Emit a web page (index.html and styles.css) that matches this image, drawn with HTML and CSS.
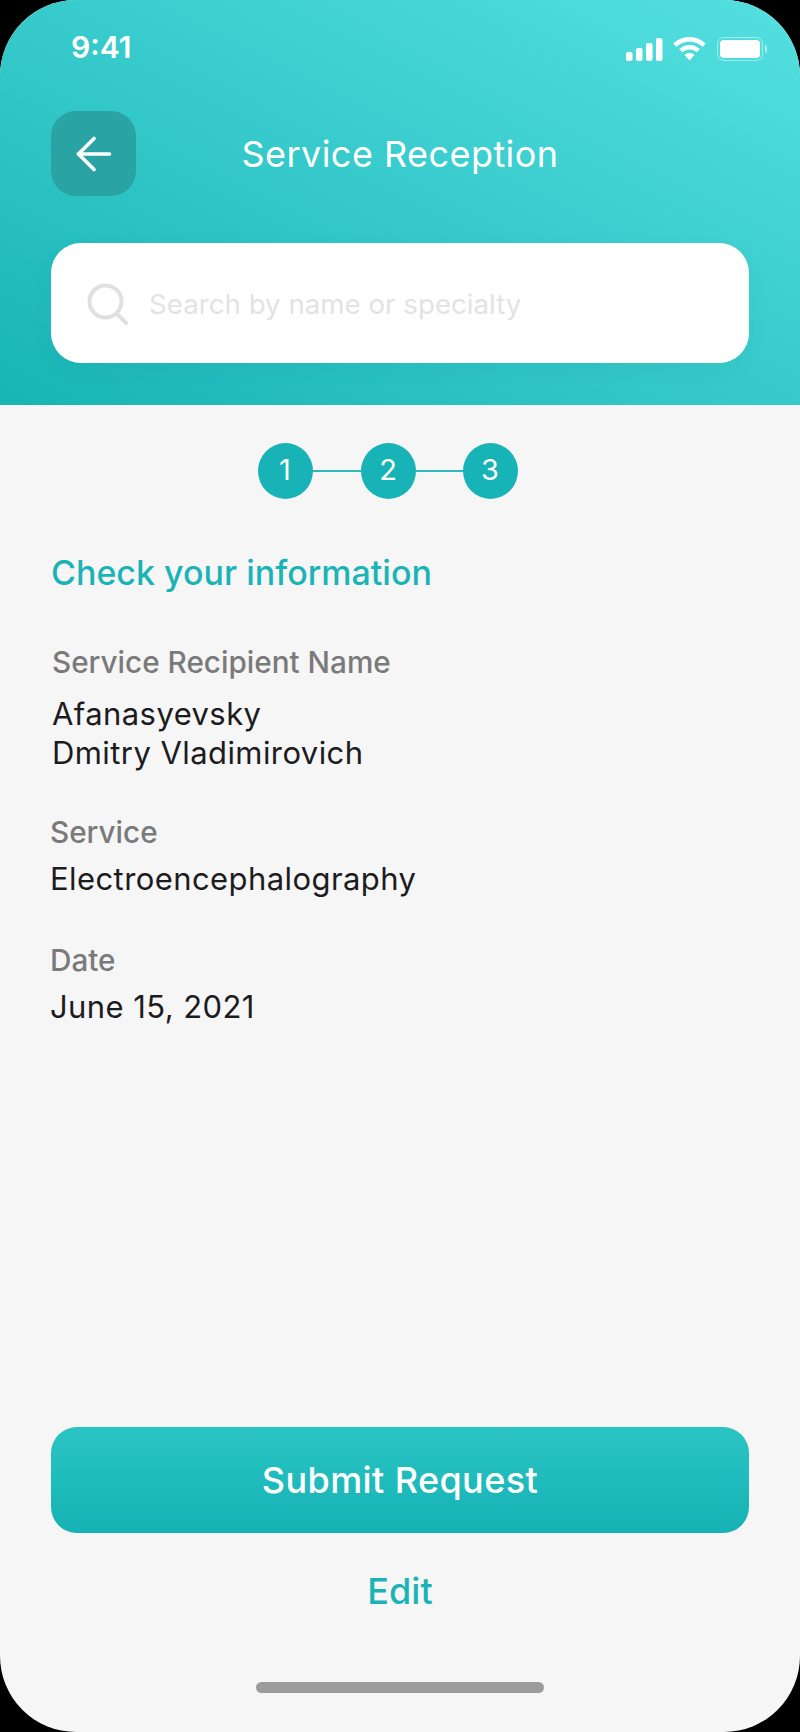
FILE: index.html
```html
<!DOCTYPE html>
<html lang="en">
<head>
<meta charset="utf-8">
<title>Service Reception</title>
<link rel="stylesheet" href="styles.css">
</head>
<body>
<div class="phone">
  <header class="header">
    <div class="status">
      <span class="time">9:41</span>
      <div class="status-icons">
        <svg class="signal" width="37" height="23" viewBox="0 0 37 23"><rect x="0" y="14" width="6.5" height="9" rx="2"/><rect x="10" y="10" width="6.5" height="13" rx="2"/><rect x="20" y="5" width="6.5" height="18" rx="2"/><rect x="30" y="0" width="6.5" height="23" rx="2"/></svg>
        <svg class="wifi" width="33" height="24" viewBox="0 0 33 24"><path d="M16.5 0C10.2 0 4.5 2.5.3 6.6l3 3.2C6.7 6.5 11.3 4.4 16.5 4.4s9.8 2.1 13.2 5.4l3-3.2C28.500 2.500 22.800 0 16.500 0z"/><path d="M16.500 8c-4 0-7.600 1.600-10.300 4.100l3 3.200c1.900-1.800 4.500-2.900 7.300-2.900s5.400 1.100 7.300 2.900l3-3.200C24.100 9.600 20.500 8 16.500 8z"/><path d="M16.500 16c-1.900 0-3.600.7-4.900 1.900l4.900 5.600 4.900-5.600c-1.300-1.200-3-1.900-4.900-1.900z"/></svg>
        <div class="battery"><div class="battery-body"><div class="battery-fill"></div></div><div class="battery-nub"></div></div>
      </div>
    </div>
    <div class="nav">
      <button class="back" aria-label="Back">
        <svg width="36" height="36" viewBox="0 0 36 36" fill="none" stroke="#fff" stroke-width="3.6" stroke-linecap="round" stroke-linejoin="round"><path d="M2.500 18H33.500"/><path d="M18 2.500 2.500 18 18 33.500"/></svg>
      </button>
      <h1 class="title">Service Reception</h1>
    </div>
    <div class="search">
      <svg class="search-icon" width="41" height="42" viewBox="0 0 41 42" fill="none" stroke="#e0e0e0" stroke-width="4" stroke-linecap="round"><circle cx="18.500" cy="18.500" r="16"/><path d="M29.500 30.500 39 40"/></svg>
      <span class="placeholder">Search by name or specialty</span>
    </div>
  </header>
  <main class="main">
    <div class="steps">
      <span class="step">1</span><span class="link"></span><span class="step">2</span><span class="link link-short"></span><span class="step">3</span>
    </div>
    <h2 class="heading">Check your information</h2>
    <section class="field field-name">
      <div class="label">Service Recipient Name</div>
      <div class="value">Afanasyevsky<br>Dmitry Vladimirovich</div>
    </section>
    <section class="field field-service">
      <div class="label">Service</div>
      <div class="value">Electroencephalography</div>
    </section>
    <section class="field field-date">
      <div class="label">Date</div>
      <div class="value">June 15, 2021</div>
    </section>
  </main>
  <footer class="footer">
    <button class="submit">Submit Request</button>
    <a class="edit">Edit</a>
    <div class="home"></div>
  </footer>
</div>
</body>
</html>
```

FILE: styles.css
```css
* { box-sizing: border-box; margin: 0; padding: 0; }
html, body { width: 800px; height: 1732px; background: #000; overflow: hidden; }
body { font-family: Inter, "Liberation Sans", sans-serif; }
.phone {
  width: 800px; height: 1732px; border-radius: 76px; overflow: hidden;
  background: #f6f6f7; display: flex; flex-direction: column;
}
.header {
  height: 405px; padding: 0 51px;
  background: linear-gradient(to bottom left, #55e0e1 0%, #18b4b6 100%);
  display: flex; flex-direction: column;
}
.status { height: 111px; padding: 30px 0 0 20px; display: flex; justify-content: space-between; align-items: flex-start; }
.time { font-size: 30px; line-height: 34px; font-weight: 600; color: #fff; }
.status-icons { display: flex; align-items: center; gap: 10px; margin: 7px -18px 0 0; }
.status-icons svg { fill: #fff; display: block; }
.battery { display: flex; align-items: center; gap: 2px; margin-left: 1px; }
.battery-body { width: 46px; height: 24px; border: 1.500px solid rgba(255,255,255,.45); border-radius: 7px; padding: 2px; }
.battery-fill { width: 100%; height: 100%; background: #fff; border-radius: 4px; }
.battery-nub { width: 2.500px; height: 8px; background: rgba(255,255,255,.5); border-radius: 0 2px 2px 0; }
.nav { display: flex; align-items: center; height: 85px; }
.back {
  width: 85px; height: 85px; border: 0; border-radius: 25px;
  background: #2aa3a5; display: flex; align-items: center; justify-content: center;
}
.title {
  flex: 1; text-align: center; margin-right: 85px; padding-top: 1px;
  font-size: 36px; line-height: 85px; font-weight: 400; letter-spacing: .45px; color: #fff;
}
.search {
  margin-top: 47px; height: 120px; border-radius: 30px; background: #fff;
  display: flex; align-items: center; padding-left: 36px;
  box-shadow: 0 6px 20px rgba(0,90,90,.06);
}
.search-icon { margin-top: 1px; }
.placeholder { margin-left: 21px; font-size: 27.700px; line-height: 36px; padding-top: 2px; color: #e3e3e5; }
.main { flex: 1; padding: 38px 51px 0; display: flex; flex-direction: column; }
.steps { display: flex; justify-content: center; align-items: center; margin-right: 25px; }
.step {
  width: 55px; height: 56px; padding-bottom: 3px; border-radius: 50%; background: #18b3b6; color: #fff;
  font-size: 29px; display: flex; align-items: center; justify-content: center;
}
.link { width: 48px; height: 2.500px; background: #30b9bb; }
.link-short { width: 47px; }
.heading { margin-top: 53px; font-size: 34px; line-height: 42px; font-weight: 500; color: #1bb4b6; }
.field { display: flex; flex-direction: column; }
.field-name { margin: 49px 0 0 1px; }
.field-service { margin: 41px 0 0 -1px; }
.field-date { margin: 43px 0 0 -1px; }
.label { font-size: 29.700px; line-height: 38px; color: #7a7a7a; font-weight: 500; }
.value { font-size: 31px; line-height: 38px; letter-spacing: .42px; color: #1c1c1e; margin-top: 9px; }
.field-name .value { margin-top: 13px; line-height: 39px; }
.footer { display: flex; flex-direction: column; align-items: center; padding: 0 51px; height: 305px; }
.submit {
  width: 100%; height: 106px; border: 0; border-radius: 26px;
  background: linear-gradient(180deg, #2ac4c4, #16b2b4);
  color: #fff; font: 500 36px Inter, "Liberation Sans", sans-serif; letter-spacing: .4px;
}
.edit { margin-top: 36px; font-size: 36px; line-height: 44px; font-weight: 500; color: #1bb4b6; }
.home { margin-top: 69px; width: 288px; height: 11px; border-radius: 6px; background: #9c9c9c; }
```
